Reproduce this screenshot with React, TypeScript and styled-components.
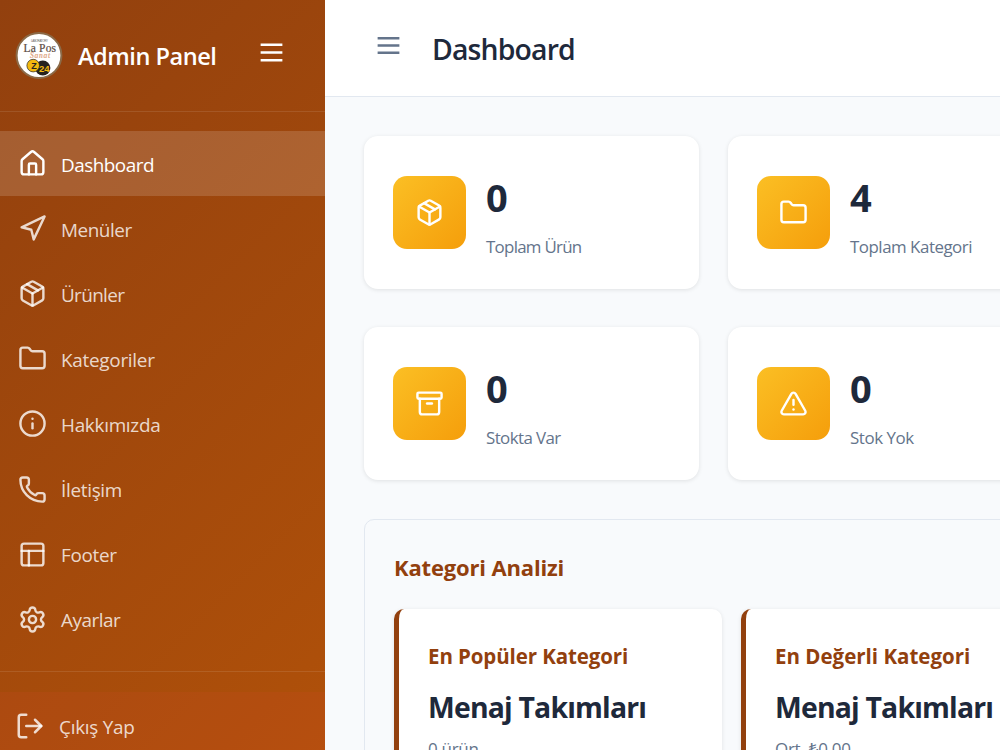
import React from 'react';
import styled, { createGlobalStyle } from 'styled-components';
import {
  Archive,
  Folder,
  House,
  Info,
  LogOut,
  Navigation,
  Package,
  PanelsTopLeft,
  Phone,
  Settings,
  TriangleAlert,
} from 'lucide-react';

const GlobalStyle = createGlobalStyle`
  *, *::before, *::after { box-sizing: border-box; }
  html, body { margin: 0; padding: 0; overflow: hidden; }
  body {
    font-family: 'Segoe UI', 'Open Sans', 'Noto Sans', sans-serif;
    background: #f8fafc;
    color: #1e293b;
  }
  svg { flex-shrink: 0; display: block; }
`;

const Shell = styled.div`
  display: flex;
  width: 1000px;
  height: 750px;
  overflow: hidden;
`;

const Sidebar = styled.aside`
  flex: 0 0 325px;
  height: 900px;
  display: flex;
  flex-direction: column;
  background: linear-gradient(135deg, #92400e 0%, #b45309 100%);
  color: #fff;
`;

const SidebarHeader = styled.div`
  display: flex;
  align-items: center;
  height: 112px;
  padding: 0 40px 0 15px;
  border-bottom: 1px solid rgba(255, 255, 255, 0.1);
`;

const Brand = styled.h2<{ $track: number }>`
  flex: 1;
  margin: 0 0 0 15px;
  padding-top: 1px;
  font-size: 23.6px;
  font-weight: 600;
  line-height: 32px;
  letter-spacing: ${(p) => p.$track}px;
  white-space: nowrap;
`;

const MenuButton = styled.button<{ $color: string }>`
  display: flex;
  padding: 0;
  border: 0;
  background: none;
  color: ${(p) => p.$color};
`;

const SidebarMenu = styled(MenuButton)`
  margin: -6px -1px 0 0;
`;

const Nav = styled.nav`
  display: flex;
  flex-direction: column;
  padding: 19px 0 19px;
`;

const NavItem = styled.a<{ $active?: boolean }>`
  display: flex;
  align-items: center;
  gap: 14.5px;
  height: 65.1px;
  padding-left: 17.5px;
  background: ${(p) => (p.$active ? 'rgba(255, 255, 255, 0.15)' : 'transparent')};
  color: ${(p) => (p.$active ? '#fff' : 'rgba(255, 255, 255, 0.8)')};
`;

const NavLabel = styled.span<{ $track: number }>`
  padding-top: 2px;
  font-size: 18.9px;
  line-height: 28px;
  letter-spacing: ${(p) => p.$track}px;
  white-space: nowrap;
`;

const SidebarFooter = styled.div`
  padding-top: 20px;
  border-top: 1px solid rgba(255, 255, 255, 0.1);
`;

const LogoutButton = styled(NavItem)`
  height: 68px;
  gap: 14px;
  padding-left: 15px;
  background: rgba(239, 68, 68, 0.1);
`;

const Main = styled.main`
  flex: 1;
  min-width: 0;
  display: flex;
  flex-direction: column;
`;

const TopBar = styled.header`
  display: flex;
  align-items: center;
  height: 97px;
  flex-shrink: 0;
  padding-left: 49px;
  background: #fff;
  border-bottom: 1px solid #e2e8f0;
`;

const TopBarMenu = styled(MenuButton)`
  margin-top: -5px;
`;

const PageTitle = styled.h1<{ $track: number }>`
  margin: 0 0 0 29px;
  padding-top: 1px;
  font-size: 28.4px;
  font-weight: 600;
  line-height: 38px;
  letter-spacing: ${(p) => p.$track}px;
`;

const Content = styled.div`
  width: 738px;
  padding: 39px 0 0 39px;
`;

const StatGrid = styled.div`
  display: grid;
  grid-template-columns: 335px 335px;
  grid-auto-rows: 153px;
  gap: 38px 29px;
`;

const StatCard = styled.div`
  display: flex;
  align-items: center;
  gap: 20px;
  padding-left: 29px;
  border-radius: 14px;
  background: #fff;
  box-shadow: 0 1px 4px rgba(0, 0, 0, 0.1);
`;

const StatIcon = styled.div`
  display: flex;
  align-items: center;
  justify-content: center;
  width: 73px;
  height: 73px;
  border-radius: 14px;
  background: linear-gradient(135deg, #fbbf24, #f59e0b);
  color: #fff;
`;

const StatText = styled.div`
  padding-top: 7px;
`;

const StatValue = styled.div`
  margin-bottom: 14px;
  font-size: 38px;
  font-weight: 700;
  line-height: 46px;
`;

const StatLabel = styled.div<{ $track: number }>`
  padding-top: 1px;
  font-size: 16.9px;
  line-height: 24px;
  letter-spacing: ${(p) => p.$track}px;
  color: #64748b;
  white-space: nowrap;
`;

const Panel = styled.section`
  width: 725px;
  height: 320px;
  margin-top: 39px;
  padding: 32px 29px;
  border: 1px solid #e2e8f0;
  border-radius: 10px;
`;

const PanelTitle = styled.h3<{ $track: number }>`
  margin: 0 0 27px;
  font-size: 22px;
  font-weight: 700;
  line-height: 30px;
  letter-spacing: ${(p) => p.$track}px;
  color: #92400e;
`;

const InsightRow = styled.div`
  display: grid;
  grid-template-columns: 328px 328px;
  gap: 19px;
`;

const InsightCard = styled.article`
  height: 190px;
  padding: 33px 0 0 29px;
  border-left: 5px solid #92400e;
  border-radius: 10px;
  background: #fff;
  box-shadow: 0 1px 4px rgba(0, 0, 0, 0.1);
  white-space: nowrap;
`;

const InsightTitle = styled.h4<{ $track: number }>`
  margin: 0 0 17px;
  font-size: 20.5px;
  font-weight: 700;
  line-height: 28px;
  letter-spacing: ${(p) => p.$track}px;
  color: #92400e;
`;

const InsightValue = styled.div<{ $track: number }>`
  margin-bottom: 10px;
  font-size: 28.4px;
  font-weight: 700;
  line-height: 40px;
  letter-spacing: ${(p) => p.$track}px;
`;

const InsightNote = styled.div<{ $track: number }>`
  font-size: 17px;
  line-height: 24px;
  letter-spacing: ${(p) => p.$track}px;
  color: #64748b;
`;

const Logo = () => (
  <svg width="48" height="48" viewBox="0 0 48 48">
    <circle cx="24" cy="23.5" r="22.4" fill="#fff" stroke="#8b6a48" strokeWidth="2" />
    <text x="24.5" y="10" fontSize="3" textAnchor="middle" textLength="17" fill="#666" fontFamily="Liberation Sans">LABORATORY</text>
    <text x="24.8" y="20.4" fontSize="11.5" textAnchor="middle" textLength="32.5" fill="#5b4b43" stroke="#5b4b43" strokeWidth=".2" fontFamily="Liberation Serif">La Pos</text>
    <text x="25" y="25.6" fontSize="7.5" fontStyle="italic" textAnchor="middle" textLength="20" fill="#e0a27c" stroke="#e0a27c" strokeWidth=".2" fontFamily="Liberation Serif">Sanat</text>
    <circle cx="27.8" cy="36" r="7.6" fill="#26221f" />
    <circle cx="18.2" cy="33.6" r="6.3" fill="#f2b90f" stroke="#26221f" strokeWidth=".7" />
    <text x="19" y="37" fontSize="9" fontWeight="700" textAnchor="middle" fill="#26221f" fontFamily="Liberation Sans">Z</text>
    <text x="29.3" y="39.6" fontSize="9.5" fontWeight="700" textAnchor="middle" fill="#f2b90f" fontFamily="Liberation Sans">24</text>
  </svg>
);

const MenuIcon = ({ step }: { step: number }) => (
  <svg width="29" height="29" viewBox="0 0 24 24" fill="none" stroke="currentColor" strokeWidth="2.1">
    <path d={`M3 ${12 - step}h18M3 12h18M3 ${12 + step}h18`} />
  </svg>
);

const navItems = [
  { label: 'Dashboard', icon: House, track: -0.5, active: true },
  { label: 'Menüler', icon: Navigation, track: -0.45 },
  { label: 'Ürünler', icon: Package, track: -0.65 },
  { label: 'Kategoriler', icon: Folder, track: -0.27 },
  { label: 'Hakkımızda', icon: Info, track: -0.28 },
  { label: 'İletişim', icon: Phone, track: -0.3 },
  { label: 'Footer', icon: PanelsTopLeft, track: -0.32 },
  { label: 'Ayarlar', icon: Settings, track: -0.5 },
];

const stats = [
  { value: '0', label: 'Toplam Ürün', icon: Package, track: -0.72 },
  { value: '4', label: 'Toplam Kategori', icon: Folder, track: -0.48 },
  { value: '0', label: 'Stokta Var', icon: Archive, track: -0.59 },
  { value: '0', label: 'Stok Yok', icon: TriangleAlert, track: -0.43 },
];

const insights = [
  { title: 'En Popüler Kategori', track: -0.1, value: 'Menaj Takımları', note: '0 ürün', noteTrack: -0.3 },
  { title: 'En Değerli Kategori', track: 0, value: 'Menaj Takımları', note: 'Ort. ₺0.00', noteTrack: -0.28 },
];

export default function App() {
  return (
    <>
      <GlobalStyle />
      <Shell>
        <Sidebar>
          <SidebarHeader>
            <Logo />
            <Brand $track={-0.5}>Admin Panel</Brand>
            <SidebarMenu $color="#fff" aria-label="Menu">
              <MenuIcon step={6.5} />
            </SidebarMenu>
          </SidebarHeader>
          <Nav>
            {navItems.map(({ label, icon: Icon, track, active }) => (
              <NavItem key={label} $active={active}>
                <Icon size={29} />
                <NavLabel $track={track}>{label}</NavLabel>
              </NavItem>
            ))}
          </Nav>
          <SidebarFooter>
            <LogoutButton>
              <LogOut size={30} />
              <NavLabel $track={-0.25}>Çıkış Yap</NavLabel>
            </LogoutButton>
          </SidebarFooter>
        </Sidebar>
        <Main>
          <TopBar>
            <TopBarMenu $color="#64748b" aria-label="Menu">
              <MenuIcon step={6} />
            </TopBarMenu>
            <PageTitle $track={-0.85}>Dashboard</PageTitle>
          </TopBar>
          <Content>
            <StatGrid>
              {stats.map(({ value, label, icon: Icon, track }) => (
                <StatCard key={label}>
                  <StatIcon>
                    <Icon size={29} />
                  </StatIcon>
                  <StatText>
                    <StatValue>{value}</StatValue>
                    <StatLabel $track={track}>{label}</StatLabel>
                  </StatText>
                </StatCard>
              ))}
            </StatGrid>
            <Panel>
              <PanelTitle $track={-0.16}>Kategori Analizi</PanelTitle>
              <InsightRow>
                {insights.map((item) => (
                  <InsightCard key={item.title}>
                    <InsightTitle $track={item.track}>{item.title}</InsightTitle>
                    <InsightValue $track={-0.82}>{item.value}</InsightValue>
                    <InsightNote $track={item.noteTrack}>{item.note}</InsightNote>
                  </InsightCard>
                ))}
              </InsightRow>
            </Panel>
          </Content>
        </Main>
      </Shell>
    </>
  );
}
